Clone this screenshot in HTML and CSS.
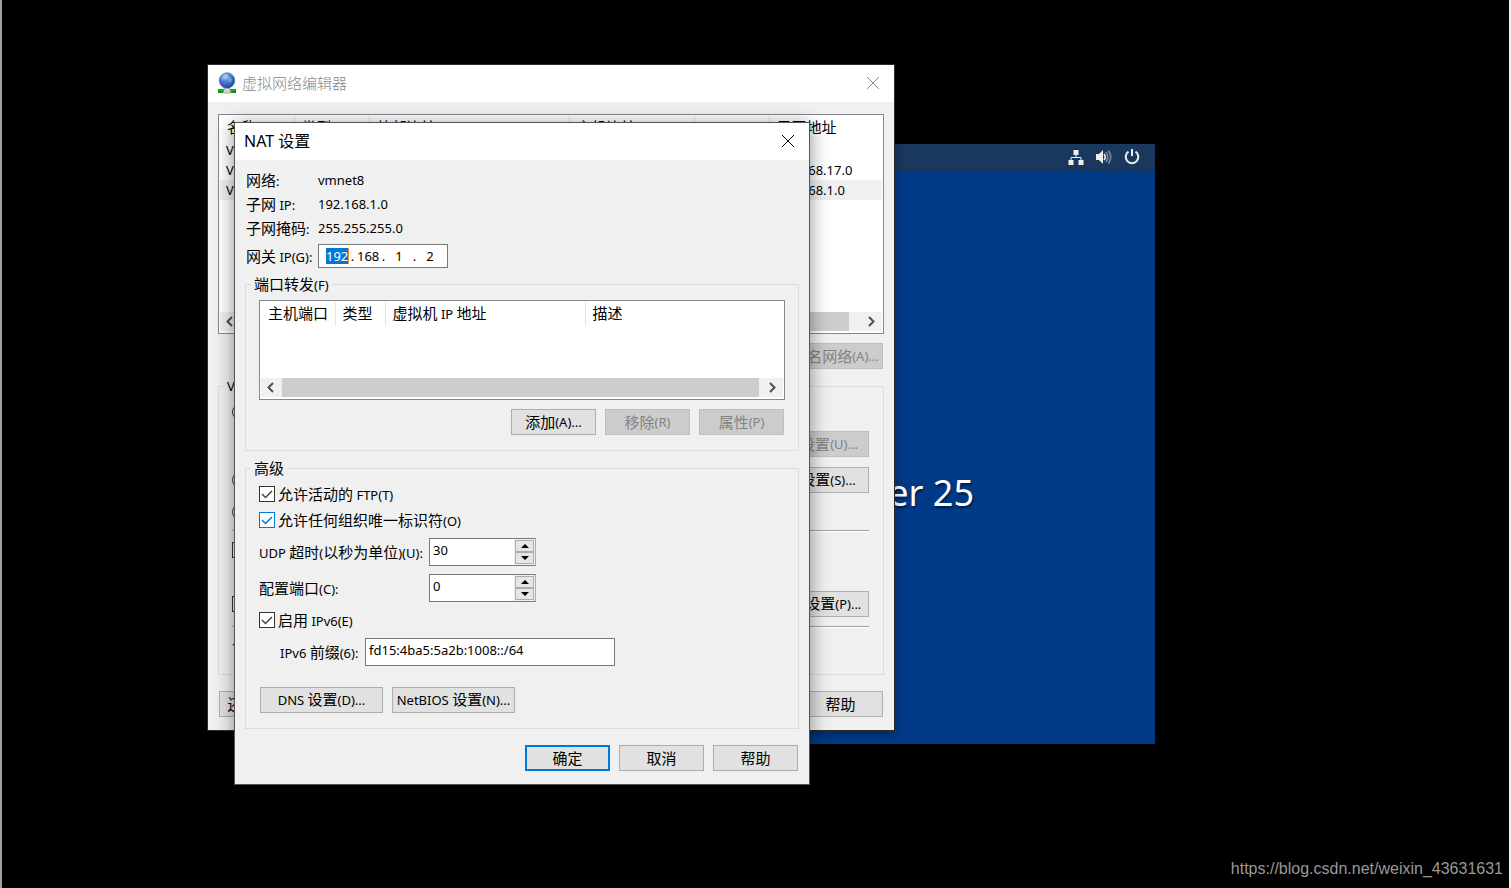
FILE: index.html
```html
<!DOCTYPE html>
<html lang="zh-CN">
<head>
<meta charset="utf-8">
<title>虚拟网络编辑器</title>
<link rel="stylesheet" href="styles.css">
</head>
<body>
<main class="desktop">
  <section class="guest" aria-label="guest">
    <div class="guest-bar">
      <svg width="16" height="16" viewBox="0 0 16 16" fill="#eeeeec"><path d="M5.500 1h5v5h-5zM.5 11h5v5h-5zM10.500 11h5v5h-5z"/><path d="M8 6v3M3 11V8.500h10V11" fill="none" stroke="#eeeeec"/></svg>
      <svg width="16" height="16" viewBox="0 0 16 16"><path d="M0 5h3l4-4v14l-4-4H0z" fill="#eeeeec"/><path d="M8 5q2.500 3 0 6" fill="none" stroke="#eeeeec" stroke-width="1.600"/><path d="M10 3q3.600 5 0 10M12.500 1.500q4.500 6.500 0 13" fill="none" stroke="#7588a0" stroke-width="1.700"/></svg>
      <svg width="16" height="16" viewBox="0 0 16 16" fill="none" stroke="#eeeeec" stroke-width="2"><path d="M4.500 2.700a6.300 6.300 0 1 0 7 0M8 0v7"/></svg>
    </div>
    <div class="guest-title">Server 25</div>
  </section>

  <section class="window editor">
    <header class="titlebar">
      <svg width="20" height="22" viewBox="0 0 20 22"><defs><radialGradient id="globe" cx=".4" cy=".25" r=".8"><stop offset="0" stop-color="#c5dcfb"/><stop offset=".35" stop-color="#5388dc"/><stop offset="1" stop-color="#173a9b"/></radialGradient></defs><path d="M1 17h18v4H1z" fill="#0b9416"/><path d="M2 18h4M14 18h4" stroke="#35c73c"/><path d="M8 15h4l2 5v1H6v-1z" fill="#d6d6ca" stroke="#85857c" stroke-width=".6"/><circle cx="10" cy="8.500" r="7.800" fill="url(#globe)" stroke="#626f99" stroke-width=".6"/><path d="M4 6q2-4 6-4l-1 3-3 1-1 3zM11 5l4 2-1 4-3-2z" fill="#8fb5ef" opacity=".55"/></svg>
      <h1>虚拟网络编辑器</h1>
      <button class="close" aria-label="关闭"><svg width="14" height="14" viewBox="0 0 14 14" fill="none" stroke="currentColor"><path d="M1 1l12 12M13 1L1 13"/></svg></button>
    </header>
    <div class="editor-body">
      <div class="listbox networks">
        <table>
          <colgroup><col class="w74"><col class="w75"><col class="w200"><col class="w125"><col class="w75"><col></colgroup>
          <thead><tr><th>名称</th><th>类型</th><th>外部连接</th><th>主机连接</th><th></th><th>子网地址</th></tr></thead>
          <tbody>
            <tr><td>VMnet0</td><td></td><td></td><td></td><td></td><td></td></tr>
            <tr><td>VMnet1</td><td></td><td></td><td></td><td></td><td>192.168.17.0</td></tr>
            <tr class="current"><td>VMnet8</td><td></td><td></td><td></td><td></td><td>192.168.1.0</td></tr>
          </tbody>
        </table>
        <div class="scroll">
          <svg width="21" height="19" viewBox="0 0 21 19"><path d="M12 5l-4.500 4.500L12 14" /></svg><span class="thumb"></span><span class="track-end"></span><svg width="21" height="19" viewBox="0 0 21 19"><path d="M8 5l4.500 4.500L8 14"/></svg>
        </div>
      </div>
      <div class="row end"><button class="btn wide" disabled><span class="zh">重命名网络</span>(A)...</button></div>
      <fieldset class="group vmnet">
        <legend>VMnet</legend>
        <div class="option first"><input type="radio" name="mode" aria-label="桥接模式"></div>
        <div class="row end"><button class="btn wide" disabled><span class="zh">自动设置</span>(U)...</button></div>
        <div class="row between s-row"><input type="radio" name="mode" aria-label="NAT"><button class="btn wide"><span>NAT <span class="zh">设置</span>(S)...</span></button></div>
        <div class="option host"><input type="radio" name="mode" aria-label="仅主机模式"></div>
        <hr>
        <div class="option connect"><input type="checkbox" aria-label="主机连接"></div>
        <div class="row between p-row"><input type="checkbox" aria-label="DHCP"><button class="btn wide"><span>DHCP <span class="zh">设置</span>(P)...</span></button></div>
        <hr>
        <div class="subnet zh">子网</div>
      </fieldset>
      <div class="row between editor-actions"><button class="btn restore"><span class="zh">还原默认设置</span>(R)</button><button class="btn zh">帮助</button></div>
    </div>
  </section>

  <section class="window dialog" role="dialog" aria-labelledby="nat-title">
    <header class="titlebar">
      <h2 id="nat-title">NAT 设置</h2>
      <button class="close" aria-label="关闭"><svg width="14" height="14" viewBox="0 0 14 14" fill="none" stroke="currentColor"><path d="M1 1l12 12M13 1L1 13"/></svg></button>
    </header>
    <div class="dialog-body">
      <dl class="facts">
        <dt><span class="zh">网络</span>:</dt><dd>vmnet8</dd>
        <dt><span class="zh">子网</span> IP:</dt><dd>192.168.1.0</dd>
        <dt><span class="zh">子网掩码</span>:</dt><dd>255.255.255.0</dd>
      </dl>
      <div class="gateway">
        <label for="gw"><span class="zh">网关</span> IP(G):</label>
        <div class="ip"><input id="gw" class="selected" value="192"><i>.</i><input value="168" aria-label="2"><i>.</i><input value="1" aria-label="3"><i>.</i><input value="2" aria-label="4"></div>
      </div>
      <fieldset class="group forwarding">
        <legend><span class="zh">端口转发</span>(F)</legend>
        <div class="listbox ports">
          <table>
            <colgroup><col class="w74"><col class="w50"><col class="w200"><col></colgroup>
            <thead><tr><th>主机端口</th><th>类型</th><th>虚拟机 <span class="latin">IP</span> 地址</th><th>描述</th></tr></thead>
          </table>
          <div class="scroll">
            <svg width="21" height="19" viewBox="0 0 21 19"><path d="M12 5l-4.500 4.500L12 14" /></svg><span class="thumb"></span><svg width="24" height="19" viewBox="0 0 24 19"><path d="M11 5l4.500 4.500L11 14"/></svg>
          </div>
        </div>
        <div class="row end"><button class="btn"><span class="zh">添加</span>(A)...</button><button class="btn" disabled><span class="zh">移除</span>(R)</button><button class="btn" disabled><span class="zh">属性</span>(P)</button></div>
      </fieldset>
      <fieldset class="group advanced">
        <legend class="zh">高级</legend>
        <label class="check"><input type="checkbox" checked><span><span class="zh">允许活动的</span> FTP(T)</span></label>
        <label class="check"><input type="checkbox" class="hot" checked><span><span class="zh">允许任何组织唯一标识符</span>(O)</span></label>
        <div class="field"><label for="udp">UDP <span class="zh">超时</span>(<span class="zh">以秒为单位</span>)(U):</label>
          <div class="spin"><input id="udp" value="30"><span class="arrows"><button aria-label="+"><svg width="8" height="4" viewBox="0 0 8 4"><path d="M0 4l4-4 4 4z"/></svg></button><button aria-label="-"><svg width="8" height="4" viewBox="0 0 8 4"><path d="M0 0l4 4 4-4z"/></svg></button></span></div></div>
        <div class="field"><label for="port"><span class="zh">配置端口</span>(C):</label>
          <div class="spin"><input id="port" value="0"><span class="arrows"><button aria-label="+"><svg width="8" height="4" viewBox="0 0 8 4"><path d="M0 4l4-4 4 4z"/></svg></button><button aria-label="-"><svg width="8" height="4" viewBox="0 0 8 4"><path d="M0 0l4 4 4-4z"/></svg></button></span></div></div>
        <label class="check"><input type="checkbox" checked><span><span class="zh">启用</span> IPv6(E)</span></label>
        <div class="field prefix"><label for="v6">IPv6 <span class="zh">前缀</span>(6):</label><input id="v6" class="text" value="fd15:4ba5:5a2b:1008::/64"></div>
        <div class="row tools"><button class="btn wide"><span>DNS <span class="zh">设置</span>(D)...</span></button><button class="btn wide"><span>NetBIOS <span class="zh">设置</span>(N)...</span></button></div>
      </fieldset>
      <div class="row end dialog-actions"><button class="btn zh default">确定</button><button class="btn zh">取消</button><button class="btn zh">帮助</button></div>
    </div>
  </section>
  <a class="credit" href="https://blog.csdn.net/weixin_43631631">https://blog.csdn.net/weixin_43631631</a>
</main>
</body>
</html>
```
FILE: styles.css
```css
* { box-sizing: border-box; }
body { margin: 0; background: #000; color: #000; font: 13px/20px "Noto Sans", "Noto Sans CJK SC", sans-serif; }
button, input { font: inherit; color: inherit; margin: 0; padding: 0; border-radius: 0; }
h1, h2, dl, dd { margin: 0; font-weight: 400; }
svg { display: block; flex: none; }

.desktop { position: relative; min-height: 100vh; overflow: hidden; border-left: 2px solid #a0a0a0; border-right: 2px solid #f0f0f0; }
.zh { font-size: 15px; font-family: "Noto Sans CJK SC", sans-serif; line-height: 20px; }
.latin { font-size: 13px; font-family: "Noto Sans", sans-serif; }

.guest { position: absolute; left: 353px; top: 144px; width: 800px; height: 600px; background: #003a87; color: #fff; }
.guest-bar { display: flex; justify-content: flex-end; align-items: center; gap: 12px; height: 27px; padding: 0 15px 2px; background: #1a385e; }
.guest-title { padding: 298px 181px 0 0; text-align: right; font-size: 36px; line-height: 48px; text-shadow: 1px 2px 2px #001c45; }

.window { position: absolute; background: #f0f0f0; border: 1px solid #2d2d2d; }
.titlebar { display: flex; align-items: center; height: 37px; padding-bottom: 2px; background: #fff; }
.titlebar h1, .titlebar h2 { flex: 1; font-size: 15px; line-height: 20px; }
.titlebar h1 { font-weight: 300; }
.titlebar h2 { font-size: 16px; }
.close { width: 42px; height: 35px; border: 0; background: none; display: flex; align-items: center; justify-content: center; }

.editor { left: 205px; top: 64px; width: 688px; box-shadow: 0 3px 10px rgba(0, 0, 0, .35); }
.editor .titlebar { padding-left: 9px; gap: 5px; color: #888; }
.editor-body { padding: 12px 10px 13px; }

.listbox { display: flex; flex-direction: column; justify-content: space-between; background: #fff; border: 1px solid #828790; padding: 1px 1px 2px; }
.listbox table { width: 100%; table-layout: fixed; border-collapse: collapse; }
.listbox th { height: 24px; padding: 0 0 0 7px; text-align: left; vertical-align: top; font: 400 15px/22px "Noto Sans CJK SC", sans-serif; white-space: nowrap; border-right: 1px solid #e5e5e5; }
.listbox th:last-child { border-right: 0; }
.listbox td { height: 20px; padding: 0 0 0 6px; line-height: 20px; }
.current { background: #f0f0f0; }
.w50 { width: 50px; } .w74 { width: 74px; } .w75 { width: 75px; } .w125 { width: 125px; } .w200 { width: 200px; }
.scroll { display: flex; height: 19px; background: #f0f0f0; }
.scroll path { fill: none; stroke: #505050; stroke-width: 2; }
.thumb { flex: 1; background: #cdcdcd; }
.track-end { width: 12px; }
.networks { height: 220px; }

.row { display: flex; align-items: center; gap: 9px; }
.end { justify-content: flex-end; }
.between { justify-content: space-between; }
.btn { display: flex; align-items: center; justify-content: center; min-width: 85px; height: 26px; border: 1px solid #adadad; padding-bottom: 1px; background: #e1e1e1; white-space: nowrap; }
.btn.wide { min-width: 123px; }
.editor .btn.wide { min-width: 110px; }
.btn.restore { min-width: 123px; }
.btn:disabled { background: #ccc; border-color: #bfbfbf; color: #838383; }
.btn.default { border: 2px solid #0078d7; }

.group { margin: 0; min-width: 0; border: 1px solid #dcdcdc; padding: 0 14px; }
.group legend { height: 20px; padding: 0 3px; margin-left: -8px; }

input[type="radio"], input[type="checkbox"] { appearance: none; display: block; flex: none; width: 16px; height: 16px; background: #fff; border: 1px solid #333; }
input[type="radio"] { border-radius: 50%; }
input[type="checkbox"]:checked { background: #fff url("data:image/svg+xml,%3Csvg xmlns='http://www.w3.org/2000/svg' viewBox='0 0 14 14'%3E%3Cpath d='M2 7l3.500 3.500L12 4' fill='none' stroke='%23444' stroke-width='1.500'/%3E%3C/svg%3E") center / 14px 14px no-repeat; }
input[type="checkbox"].hot:checked { border-color: #0078d7; background-image: url("data:image/svg+xml,%3Csvg xmlns='http://www.w3.org/2000/svg' viewBox='0 0 14 14'%3E%3Cpath d='M2 7l3.500 3.500L12 4' fill='none' stroke='%230078d7' stroke-width='1.500'/%3E%3C/svg%3E"); }

.networks + .row { margin: 9px 1px 7px 0; }
.vmnet { height: 299px; padding: 0 14px 0 13px; }
.vmnet .first { margin: 8px 0 11px; }
.s-row { margin-top: 10px; }
.host { margin: 11px 0 10px; }
.vmnet hr { height: 2px; margin: 0; border: 0; border-top: 1px solid #a0a0a0; background: #fff; }
.connect { margin: 10px 0 33px; }
.p-row { margin-bottom: 9px; }
.subnet { padding-top: 6px; }
.editor-actions { margin: 16px 1px 0; }

.dialog { left: 232px; top: 122px; width: 576px; border-color: #555; box-shadow: 0 3px 18px rgba(0, 0, 0, .45); }
.dialog .titlebar { padding-left: 9px; }
.dialog-body { padding: 10px 10px 13px; }
.facts { display: grid; grid-template-columns: 72px 1fr; grid-auto-rows: 20px; row-gap: 4px; padding: 0 1px; white-space: nowrap; }
.gateway { display: flex; align-items: center; margin: 6px 1px 6px; }
.gateway label { width: 72px; white-space: nowrap; }
.ip { display: flex; align-items: center; height: 24px; padding: 0 6px 0 7px; background: #fff; border: 1px solid #7a7a7a; }
.ip input { width: 22px; height: 16px; border: 0; text-align: center; line-height: 16px; background: none; }
.ip .selected { background: #0078d7; color: #fff; box-shadow: 1px 0 #ff8728; }
.ip i { width: 9px; font-style: normal; text-align: center; }

.forwarding { padding: 0 13px 15px; }
.ports { height: 100px; margin: 6px 0 9px; }
.forwarding .row { padding-right: 1px; }
.advanced { margin-top: 7px; padding: 0 13px 15px; }
.check { display: flex; align-items: center; gap: 3px; height: 26px; width: max-content; }
.advanced legend + .check { margin-top: 3px; }
.field { display: flex; align-items: center; height: 36px; white-space: nowrap; }
.check + .field { margin-top: 1px; }
.field + .check { margin-top: 1px; }
.field > label { width: 170px; }
.spin { display: flex; width: 107px; height: 28px; background: #fff; border: 1px solid #7a7a7a; border-right-color: #adadad; }
.spin input { flex: 1; min-width: 0; border: 0; padding: 0 3px 4px; background: none; }
.arrows { display: flex; flex-direction: column; width: 21px; padding: 1px; background: #f0f0f0; }
.arrows button { flex: 1; display: flex; align-items: center; justify-content: center; border: 1px solid #adadad; background: #e6e6e6; }
.prefix { padding-left: 21px; }
.prefix > label { width: 85px; }
.text { width: 250px; height: 28px; padding: 0 3px 4px; background: #fff; border: 1px solid #7a7a7a; }
.tools { margin-top: 17px; padding-left: 1px; }
.dialog-actions { margin: 16px 1px 0; }

.credit { position: absolute; right: 6px; bottom: 9px; color: #999; font: 16px/20px "Liberation Sans", sans-serif; text-decoration: none; }
```
